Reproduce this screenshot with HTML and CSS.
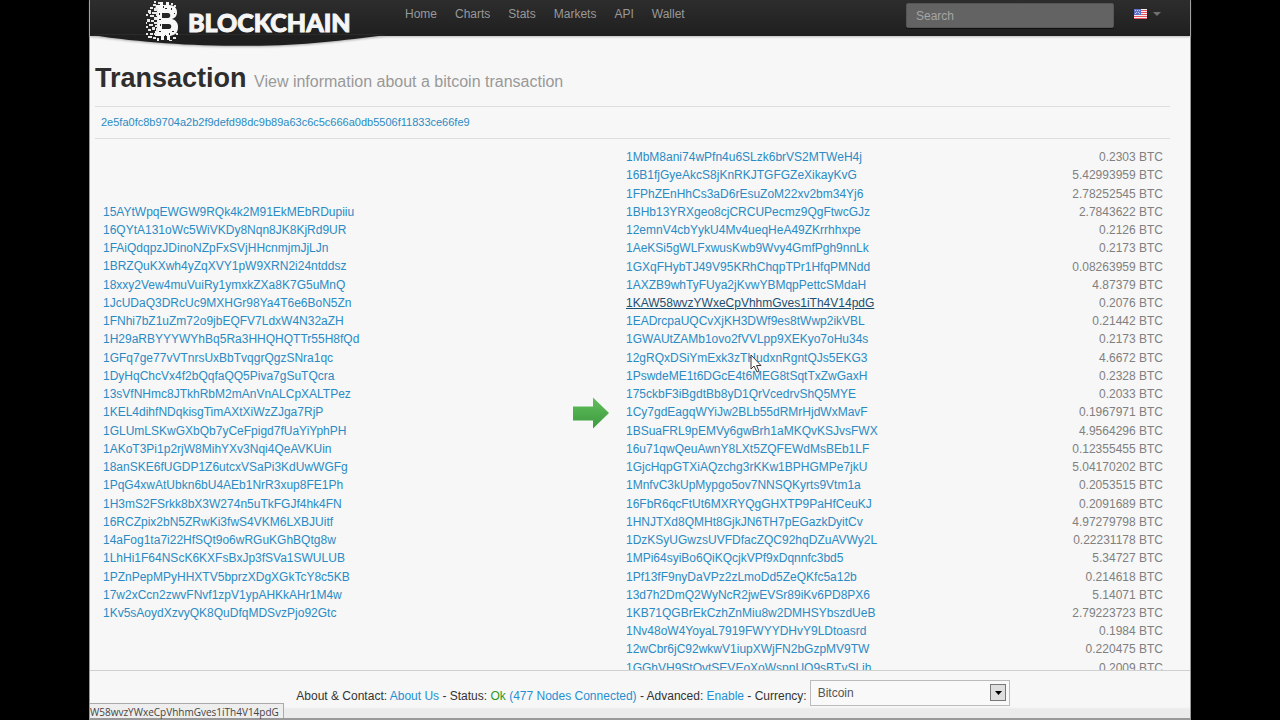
FILE: index.html
```html
<!DOCTYPE html>
<html lang="en">
<head>
<meta charset="utf-8">
<title>Transaction</title>
<link rel="stylesheet" href="styles.css">
</head>
<body>
<div class="page">
<header class="topbar">
  <svg class="swoop" viewBox="0 0 297 12" preserveAspectRatio="none" aria-hidden="true"><path d="M0 0H297C250 5 215 10 156 10C95 10 55 7 0 0Z" fill="#1f1f1f"/></svg>
  <a class="brand" href="#">
    <svg class="coin" viewBox="0 0 34 42" aria-hidden="true">
      <path fill="#f7f7f7" fill-rule="evenodd" d="M11 5h4V2h3v3h3V2h3v3c5 0 8 3 8 7c0 4-2 6-5 7c4 1 6 4 6 8c0 6-3 8-8 9v4h-3v-4h-3v4h-3v-4h-6v-5h2V10h-2zM17 13v5h6c3 0 3-5 0-5zM17 24v5h7c3 0 3-5 0-5z"/>
      <path fill="#e8e8e8" d="M8 4h3v2H8zM5 7h3v2H5zM9 8h4v3H9zM3 10h3v3H3zM7 12h4v2H7zM11 12h2v4h-2zM1 14h2v2H1zM5 15h4v2H5zM9 17h4v3H9zM2 19h3v3H2zM6 20h3v2H6zM9 22h4v2H9zM4 24h4v2H4zM1 26h2v2H1zM7 27h3v3H7zM10 25h3v2h-3zM11 28h2v4h-2zM3 29h3v2H3zM1 33h2v2H1zM5 33h3v2H5zM9 33h3v2H9zM3 36h4v2H3zM8 37h3v2H8zM12 38h2v3h-2zM9 1h2v2H9zM13 2h2v2h-2zM26 3h2v2h-2zM29 5h2v2h-2zM28 37h3v2h-3zM24 40h3v1h-3zM31 33h2v2h-2zM1 22h1v2H1zM4 12h2v2H4z"/>
      <path fill="#262626" d="M14 13h1v2h-1zM14 19h2v1h-2zM15 24h1v2h-1zM14 31h2v1h-2zM18 6h1v2h-1zM20 8h2v1h-2zM26 8h1v2h-1zM27 31h2v1h-2zM20 35h1v1h-1zM24 33h1v2h-1zM29 13h1v1h-1z"/>
    </svg>
    <span class="brand-name">BLOCKCHAIN</span>
  </a>
  <nav class="nav"><a href="#">Home</a><a href="#">Charts</a><a href="#">Stats</a><a href="#">Markets</a><a href="#">API</a><a href="#">Wallet</a></nav>
  <input class="search" type="search" placeholder="Search" aria-label="Search">
  <button class="lang" type="button" aria-label="Language">
    <svg class="flag" viewBox="0 0 13 10" aria-hidden="true"><rect width="13" height="10" fill="#f4eef4"/><path fill="#e2555f" d="M0 9h13v1H0zM0 7h13v1H0zM6 1h7v1H6zM6 3h7v1H6zM6 5h7v1H6z"/><rect width="7" height="6" fill="#5f70c8"/><path fill="#c5cdf2" d="M1 1h1v1H1zM3 1h1v1H3zM5 1h1v1H5zM2 3h1v1H2zM4 3h1v1H4zM1 4h1v1H1zM5 4h1v1H5z"/></svg>
    <svg class="caret" viewBox="0 0 8 4" aria-hidden="true"><path d="M0 0h8L4 4z" fill="#707070"/></svg>
  </button>
</header>
<main class="content">
  <h1 class="title">Transaction <small>View information about a bitcoin transaction</small></h1>
  <p class="hash"><a href="#">2e5fa0fc8b9704a2b2f9defd98dc9b89a63c6c5c666a0db5506f11833ce66fe9</a></p>
  <div class="tx">
    <ul class="inputs">
      <li><a href="#">15AYtWpqEWGW9RQk4k2M91EkMEbRDupiiu</a></li>
      <li><a href="#">16QYtA131oWc5WiVKDy8Nqn8JK8KjRd9UR</a></li>
      <li><a href="#">1FAiQdqpzJDinoNZpFxSVjHHcnmjmJjLJn</a></li>
      <li><a href="#">1BRZQuKXwh4yZqXVY1pW9XRN2i24ntddsz</a></li>
      <li><a href="#">18xxy2Vew4muVuiRy1ymxkZXa8K7G5uMnQ</a></li>
      <li><a href="#">1JcUDaQ3DRcUc9MXHGr98Ya4T6e6BoN5Zn</a></li>
      <li><a href="#">1FNhi7bZ1uZm72o9jbEQFV7LdxW4N32aZH</a></li>
      <li><a href="#">1H29aRBYYYWYhBq5Ra3HHQHQTTr55H8fQd</a></li>
      <li><a href="#">1GFq7ge77vVTnrsUxBbTvqgrQgzSNra1qc</a></li>
      <li><a href="#">1DyHqChcVx4f2bQqfaQQ5Piva7gSuTQcra</a></li>
      <li><a href="#">13sVfNHmc8JTkhRbM2mAnVnALCpXALTPez</a></li>
      <li><a href="#">1KEL4dihfNDqkisgTimAXtXiWzZJga7RjP</a></li>
      <li><a href="#">1GLUmLSKwGXbQb7yCeFpigd7fUaYiYphPH</a></li>
      <li><a href="#">1AKoT3Pi1p2rjW8MihYXv3Nqi4QeAVKUin</a></li>
      <li><a href="#">18anSKE6fUGDP1Z6utcxVSaPi3KdUwWGFg</a></li>
      <li><a href="#">1PqG4xwAtUbkn6bU4AEb1NrR3xup8FE1Ph</a></li>
      <li><a href="#">1H3mS2FSrkk8bX3W274n5uTkFGJf4hk4FN</a></li>
      <li><a href="#">16RCZpix2bN5ZRwKi3fwS4VKM6LXBJUitf</a></li>
      <li><a href="#">14aFog1ta7i22HfSQt9o6wRGuKGhBQtg8w</a></li>
      <li><a href="#">1LhHi1F64NScK6KXFsBxJp3fSVa1SWULUB</a></li>
      <li><a href="#">1PZnPepMPyHHXTV5bprzXDgXGkTcY8c5KB</a></li>
      <li><a href="#">17w2xCcn2zwvFNvf1zpV1ypAHKkAHr1M4w</a></li>
      <li><a href="#">1Kv5sAoydXzvyQK8QuDfqMDSvzPjo92Gtc</a></li>
    </ul>
    <svg class="arrow" viewBox="0 0 36 32" aria-label="to" role="img"><defs><linearGradient id="g" x1="0" y1="0" x2="0" y2="1"><stop offset="0" stop-color="#62bf5b"/><stop offset="1" stop-color="#3b9a40"/></linearGradient></defs><path d="M0 9.500H20V0.500L36 16L20 31.500V23.500H0Z" fill="url(#g)"/></svg>
    <table class="outputs">
      <tbody>
      <tr><td><a href="#">1MbM8ani74wPfn4u6SLzk6brVS2MTWeH4j</a></td><td>0.2303 BTC</td></tr>
      <tr><td><a href="#">16B1fjGyeAkcS8jKnRKJTGFGZeXikayKvG</a></td><td>5.42993959 BTC</td></tr>
      <tr><td><a href="#">1FPhZEnHhCs3aD6rEsuZoM22xv2bm34Yj6</a></td><td>2.78252545 BTC</td></tr>
      <tr><td><a href="#">1BHb13YRXgeo8cjCRCUPecmz9QgFtwcGJz</a></td><td>2.7843622 BTC</td></tr>
      <tr><td><a href="#">12emnV4cbYykU4Mv4ueqHeA49ZKrrhhxpe</a></td><td>0.2126 BTC</td></tr>
      <tr><td><a href="#">1AeKSi5gWLFxwusKwb9Wvy4GmfPgh9nnLk</a></td><td>0.2173 BTC</td></tr>
      <tr><td><a href="#">1GXqFHybTJ49V95KRhChqpTPr1HfqPMNdd</a></td><td>0.08263959 BTC</td></tr>
      <tr><td><a href="#">1AXZB9whTyFUya2jKvwYBMqpPettcSMdaH</a></td><td>4.87379 BTC</td></tr>
      <tr><td><a class="hovered" href="#">1KAW58wvzYWxeCpVhhmGves1iTh4V14pdG</a></td><td>0.2076 BTC</td></tr>
      <tr><td><a href="#">1EADrcpaUQCvXjKH3DWf9es8tWwp2ikVBL</a></td><td>0.21442 BTC</td></tr>
      <tr><td><a href="#">1GWAUtZAMb1ovo2fVVLpp9XEKyo7oHu34s</a></td><td>0.2173 BTC</td></tr>
      <tr><td><a href="#">12gRQxDSiYmExk3zTHudxnRgntQJs5EKG3</a></td><td>4.6672 BTC</td></tr>
      <tr><td><a href="#">1PswdeME1t6DGcE4t6MEG8tSqtTxZwGaxH</a></td><td>0.2328 BTC</td></tr>
      <tr><td><a href="#">175ckbF3iBgdtBb8yD1QrVcedrvShQ5MYE</a></td><td>0.2033 BTC</td></tr>
      <tr><td><a href="#">1Cy7gdEagqWYiJw2BLb55dRMrHjdWxMavF</a></td><td>0.1967971 BTC</td></tr>
      <tr><td><a href="#">1BSuaFRL9pEMVy6gwBrh1aMKQvKSJvsFWX</a></td><td>4.9564296 BTC</td></tr>
      <tr><td><a href="#">16u71qwQeuAwnY8LXt5ZQFEWdMsBEb1LF</a></td><td>0.12355455 BTC</td></tr>
      <tr><td><a href="#">1GjcHqpGTXiAQzchg3rKKw1BPHGMPe7jkU</a></td><td>5.04170202 BTC</td></tr>
      <tr><td><a href="#">1MnfvC3kUpMypgo5ov7NNSQKyrts9Vtm1a</a></td><td>0.2053515 BTC</td></tr>
      <tr><td><a href="#">16FbR6qcFtUt6MXRYQgGHXTP9PaHfCeuKJ</a></td><td>0.2091689 BTC</td></tr>
      <tr><td><a href="#">1HNJTXd8QMHt8GjkJN6TH7pEGazkDyitCv</a></td><td>4.97279798 BTC</td></tr>
      <tr><td><a href="#">1DzKSyUGwzsUVFDfacZQC92hqDZuAVWy2L</a></td><td>0.22231178 BTC</td></tr>
      <tr><td><a href="#">1MPi64syiBo6QiKQcjkVPf9xDqnnfc3bd5</a></td><td>5.34727 BTC</td></tr>
      <tr><td><a href="#">1Pf13fF9nyDaVPz2zLmoDd5ZeQKfc5a12b</a></td><td>0.214618 BTC</td></tr>
      <tr><td><a href="#">13d7h2DmQ2WyNcR2jwEVSr89iKv6PD8PX6</a></td><td>5.14071 BTC</td></tr>
      <tr><td><a href="#">1KB71QGBrEkCzhZnMiu8w2DMHSYbszdUeB</a></td><td>2.79223723 BTC</td></tr>
      <tr><td><a href="#">1Nv48oW4YoyaL7919FWYYDHvY9LDtoasrd</a></td><td>0.1984 BTC</td></tr>
      <tr><td><a href="#">12wCbr6jC92wkwV1iupXWjFN2bGzpMV9TW</a></td><td>0.220475 BTC</td></tr>
      <tr><td><a href="#">1GGhVH9StQvtSEVEoXoWspnUQ9sBTvSLih</a></td><td>0.2009 BTC</td></tr>
      </tbody>
    </table>
  </div>
</main>
<footer class="footer">
  <p class="links">About &amp; Contact: <a href="#">About Us</a> - Status: <span class="ok">Ok</span> <a href="#">(477 Nodes Connected)</a> - Advanced: <a href="#">Enable</a> - <label for="currency">Currency:</label></p>
  <div class="select-wrap"><select id="currency" class="currency"><option>Bitcoin</option></select><svg class="drop" viewBox="0 0 16 17" aria-hidden="true"><rect x="0.500" y="0.500" width="15" height="16" fill="#dedede" stroke="#777"/><path d="M5 7h7L8.500 11z" fill="#000"/></svg></div>
</footer>
<div class="statusbar"><span>W58wvzYWxeCpVhhmGves1iTh4V14pdG</span></div>
</div>
<svg class="cursor" viewBox="0 0 12 19" aria-hidden="true"><path d="M1 1V15L4 12L7 18L9 17L6.500 11.500H11Z" fill="#fff" stroke="#3c3434" stroke-width="1"/></svg>
</body>
</html>
```
FILE: styles.css
```css
* { box-sizing: border-box; }
body {
  margin: 0;
  background: #000;
  font-family: "Liberation Sans", Arial, sans-serif;
  font-size: 12px;
  color: #333;
  overflow: hidden;
}
a { color: #2a8bc4; text-decoration: none; }
.page {
  position: relative;
  display: flex;
  flex-direction: column;
  max-width: 1102px;
  height: 100vh;
  margin: 0 auto;
  background: #f7f7f7;
  border: solid #999;
  border-width: 0 1px 2px;
}
.topbar {
  position: relative;
  display: flex;
  align-items: flex-start;
  height: 36px;
  flex: none;
  background: linear-gradient(#2d2d2d, #1f1f1f);
  box-shadow: 0 1px 2px #bbb;
}
.swoop { position: absolute; left: 0; top: 35px; width: 297px; height: 13px; filter: drop-shadow(0 1px 1px #aaa); }
.brand { position: relative; display: flex; align-items: flex-start; width: 300px; padding-left: 55px; }
.coin { width: 34px; height: 42px; flex: none; }
.brand-name {
  margin-left: 9px;
  font-family: Lato, sans-serif;
  font-weight: 900;
  font-size: 25px;
  line-height: 44px;
  color: #f5f5f5;
  -webkit-text-stroke: 1px #f5f5f5;
}
.nav { display: flex; gap: 18px; margin-left: 15px; flex: 1; }
.nav a { color: #999; line-height: 28px; }
.search {
  width: 208px;
  height: 25px;
  margin: 3px 0 0;
  padding: 0 9px;
  border: 1px solid #555;
  border-radius: 2px;
  background: #636363;
  color: #ccc;
  font: inherit;
  box-shadow: 0 1px 0 #111;
}
.search::placeholder { color: #a5a5a5; }
.lang { display: flex; align-items: center; gap: 6px; height: 28px; margin: 0 29px 0 20px; padding: 0; border: 0; background: none; }
.flag { width: 13px; height: 10px; }
.caret { width: 8px; height: 4px; }
.content { flex: 1; min-height: 0; overflow: hidden; padding: 0 20px 0 5px; }
.title { margin: 24px 0 0; padding-bottom: 6px; font-size: 27px; line-height: 36px; color: #2e2e2e; border-bottom: 1px solid #dedede; }
.title small { font-size: 16px; font-weight: 400; color: #999; }
.hash { margin: 0; padding: 0 6px; line-height: 31px; font-size: 11px; border-bottom: 1px solid #dedede; }
.tx { display: grid; grid-template-columns: 471px 53px 1fr; align-items: center; margin-top: 9px; }
.inputs { display: grid; grid-auto-rows: 1fr; height: 420px; margin: 0; padding: 0 8px; list-style: none; line-height: 18px; }
.arrow { width: 36px; height: 32px; margin-left: 7px; }
.outputs { width: 100%; height: 529px; border-collapse: collapse; line-height: 18px; }
.outputs td { padding: 0 7px; }
.outputs td:last-child { text-align: right; color: #808080; }
.outputs .hovered { color: #1c4f70; text-decoration: underline; }
.footer {
  display: flex;
  justify-content: center;
  gap: 3px;
  height: 48px;
  flex: none;
  padding: 9px 0 0 26px;
  border-top: 1px solid #d0d0d0;
  background: linear-gradient(#f7f7f7 36px, #ebebeb 38px);
}
.links { margin: 0; line-height: 32px; }
.links a { color: #1f90d2; }
.links .ok { color: #2c9a1c; }
.select-wrap { position: relative; width: 200px; height: 26px; }
.currency { width: 100%; height: 26px; padding: 0 7px; border: 1px solid #bbb; border-radius: 0; background: #f9f9f9; color: #555; font: inherit; appearance: none; }
.drop { position: absolute; right: 4px; top: 4px; width: 16px; height: 17px; pointer-events: none; }
.statusbar {
  position: absolute;
  left: 0;
  bottom: 0;
  display: flex;
  height: 15px;
  padding-right: 4px;
  border: solid #aaa;
  border-width: 1px 1px 0 0;
  background: #eee;
  color: #444;
  font-family: "Open Sans", sans-serif;
  font-size: 10px;
  line-height: 16px;
}
.cursor { position: absolute; left: 750px; top: 354px; width: 12px; height: 19px; }
```
